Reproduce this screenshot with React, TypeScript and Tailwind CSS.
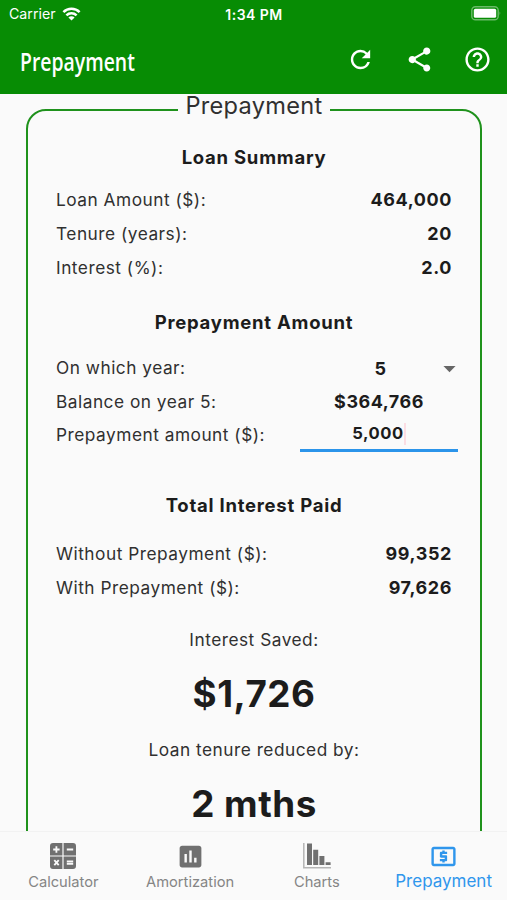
import type { ReactNode } from "react";
import { MdArrowDropDown, MdAssessment, MdHelpOutline, MdLocalAtm, MdRefresh, MdShare } from "react-icons/md";

const loanRows = [
  { label: "Loan Amount ($):", value: "464,000" },
  { label: "Tenure (years):", value: "20" },
  { label: "Interest (%):", value: "2.0" },
];

const interestRows = [
  { label: "Without Prepayment ($):", value: "99,352" },
  { label: "With Prepayment ($):", value: "97,626" },
];

function WifiIcon() {
  return (
    <svg width="19" height="14" viewBox="0 0 18 14" fill="none" stroke="white" strokeWidth="2.5">
      <path d="M0.9 5.1a11.5 11.5 0 0 1 16.2 0" />
      <path d="M3.9 8.4a7.2 7.2 0 0 1 10.2 0" />
      <path d="M9 13.6 5.9 10.6a4.4 4.4 0 0 1 6.2 0Z" fill="white" stroke="none" />
    </svg>
  );
}

function BatteryIcon() {
  return (
    <svg width="31" height="15" viewBox="0 0 31 15">
      <rect x="0.8" y="0.8" width="26.4" height="13" rx="3.6" fill="none" stroke="white" strokeOpacity="0.4" strokeWidth="1.4" />
      <rect x="2.8" y="2.8" width="22.4" height="9" rx="1.6" fill="white" />
      <path d="M28.6 5.2q1.7 2.1 0 4.2Z" fill="white" fillOpacity="0.45" />
    </svg>
  );
}

function CalculatorIcon() {
  return (
    <svg width="26" height="26" viewBox="0 0 26 26">
      <path fill="#707070" d="M3 0h9.4v12.4H0V3a3 3 0 0 1 3-3ZM13.6 0H23a3 3 0 0 1 3 3v9.4H13.6ZM0 13.6h12.4V26H3a3 3 0 0 1-3-3ZM13.6 13.6H26V23a3 3 0 0 1-3 3h-9.4Z" />
      <g stroke="#fafafa" strokeWidth="1.8">
        <path d="M3.2 6.5h6.4M6.4 3.3v6.4M16.8 6.5h6.4" />
        <path d="M4.3 17.2l4.4 5M8.7 17.2l-4.4 5" />
        <path d="M16.8 18.5h6.4M16.8 20.8h6.4" />
      </g>
    </svg>
  );
}

function HistogramIcon() {
  return (
    <svg width="28" height="26" viewBox="0 0 28 26">
      <path d="M0.8 0v24.8H28" fill="none" stroke="#b5b5b5" strokeWidth="1.5" />
      <path fill="#707070" d="M4 0.5h5V22H4ZM10.2 6.7h5V22h-5ZM16.4 13h5v9h-5ZM22.6 19.2h5V22h-5Z" />
    </svg>
  );
}

function Heading({ children, className }: { children: ReactNode; className: string }) {
  return (
    <h2 className={`flex h-[34px] items-center justify-center text-[18.5px] font-bold tracking-[0.75px] text-[#1c1c1c] ${className}`}>
      {children}
    </h2>
  );
}

function Row({ label, value }: { label: string; value: string }) {
  return (
    <div className="flex h-[34px] items-center justify-between">
      <span>{label}</span>
      <span className="pb-px text-[18px] font-bold tracking-[0.6px] text-[#1c1c1c]">{value}</span>
    </div>
  );
}

function NavItem({ icon, label, active }: { icon: ReactNode; label: string; active?: boolean }) {
  return (
    <button className={`flex flex-1 flex-col items-center ${active ? "text-[#2f96ec]" : "text-[#858585]"}`}>
      <span className="grid h-[30px] place-items-center">{icon}</span>
      <span className={`leading-5 ${active ? "text-[17px]" : "mt-px text-[14.7px]"}`}>{label}</span>
    </button>
  );
}

export default function App() {
  return (
    <div className="flex h-[900px] w-[507px] flex-col overflow-hidden bg-[#fafafa] font-['Inter',sans-serif] text-[#303030]">
      <header className="h-[94px] shrink-0 bg-[#078c04] text-white">
        <div className="grid h-7 grid-cols-3 items-center pl-[9px] pr-[8px]">
          <div className="flex items-center gap-1.5 text-[14.2px]">
            <span>Carrier</span>
            <WifiIcon />
          </div>
          <span className="text-center text-[14px] font-semibold tracking-[0.45px]">1:34 PM</span>
          <div className="-mr-[3px] flex justify-end pb-px">
            <BatteryIcon />
          </div>
        </div>
        <div className="flex h-[63px] items-center justify-between pl-5 pr-[15px]">
          <h1 className="origin-left scale-x-[0.77] pt-1 font-['Open_Sans',sans-serif] text-[25.2px] font-semibold">Prepayment</h1>
          <div className="flex items-center gap-[29.5px]">
            <MdRefresh size={29} />
            <MdShare size={29} />
            <MdHelpOutline size={29} />
          </div>
        </div>
      </header>

      <main className="min-h-0 flex-1">
        <fieldset className="ml-[26px] h-[800px] w-[456px] min-w-0 rounded-[20px] border-2 border-[#1f921c] px-7 text-[17.3px] tracking-[0.5px]">
          <legend className="mx-auto h-8 px-[7px] pb-2 text-[23.6px] leading-6 tracking-[0.3px]">Prepayment</legend>

          <Heading className="mt-[15px]">Loan Summary</Heading>
          <div className="mt-2">
            {loanRows.map((row) => (
              <Row key={row.label} {...row} />
            ))}
          </div>

          <Heading className="mt-[21px]">Prepayment Amount</Heading>
          <div className="mt-[11px] grid w-[402px] grid-cols-[244px_158px] grid-rows-[34px_33px_34px] items-center">
            <span>On which year:</span>
            <div className="grid grid-cols-[1fr_auto] items-center font-bold text-[#1c1c1c]">
              <span className="pl-[26px] text-center text-[18px]">5</span>
              <MdArrowDropDown size={29} className="-mr-[6px] text-[#666]" />
            </div>
            <span>Balance on year 5:</span>
            <span className="pb-px text-center text-[18px] font-bold text-[#1c1c1c]">$364,766</span>
            <span>Prepayment amount ($):</span>
            <div className="flex h-full items-center justify-center border-b-[3px] border-[#2b94ea] text-[16.6px] font-bold text-[#1c1c1c]">
              <span>5,000</span>
              <span className="h-[22px] w-0.5 bg-[#fbdde3]" />
            </div>
          </div>

          <Heading className="mt-[37px]">Total Interest Paid</Heading>
          <div className="mt-[14px]">
            {interestRows.map((row) => (
              <Row key={row.label} {...row} />
            ))}
          </div>

          <div className="mt-[17px] text-center">
            <p className="h-[34px] leading-[35px]">Interest Saved:</p>
            <p className="mt-[7px] h-[60px] text-[36.8px] leading-[61px] font-bold text-[#1c1c1c]">$1,726</p>
            <p className="mt-[9px] h-[34px] leading-[35px]">Loan tenure reduced by:</p>
            <p className="mt-[7px] h-[60px] text-[36.8px] leading-[61px] font-bold text-[#1c1c1c]">2 mths</p>
          </div>
        </fieldset>
      </main>

      <nav className="relative z-10 flex h-[69px] shrink-0 border-t border-[#f2f2f2] bg-[#fafafa] pt-[9px]">
        <NavItem icon={<CalculatorIcon />} label="Calculator" />
        <NavItem icon={<MdAssessment size={29} className="text-[#707070]" />} label="Amortization" />
        <NavItem icon={<HistogramIcon />} label="Charts" />
        <NavItem icon={<MdLocalAtm size={29} />} label="Prepayment" active />
      </nav>
    </div>
  );
}
